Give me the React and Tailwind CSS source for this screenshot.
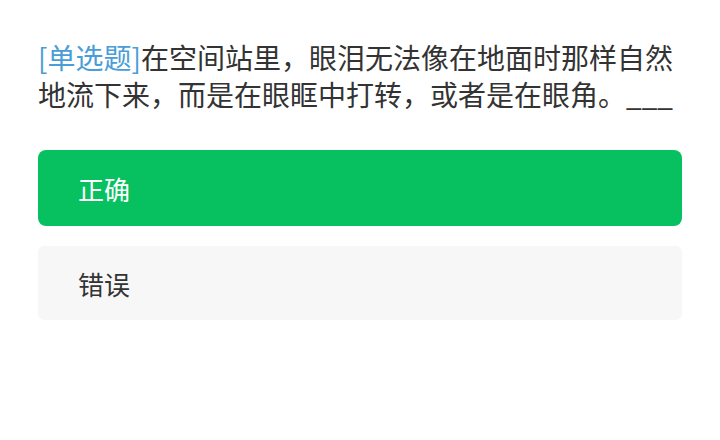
import React from "react";

const options = [
  { label: "正确", selected: true },
  { label: "错误", selected: false },
];

export default function App() {
  return (
    <div
      className="w-[720px] h-[440px] bg-white px-[38px] pt-[39px]"
      style={{ fontFamily: '"Noto Sans CJK SC", "Noto Sans", sans-serif' }}
    >
      <p className="text-[28px] leading-[37px] text-[#333333]">
        <span className="text-[#4a9dd6]">[单选题]</span>
        在空间站里，眼泪无法像在地面时那样自然地流下来，而是在眼眶中打转，或者是在眼角。___
      </p>
      <div className="mt-[37px] flex flex-col gap-[20px]">
        {options.map((o) => (
          <div
            key={o.label}
            className={
              o.selected
                ? "h-[76px] rounded-[8px] bg-[#07c160] text-white flex items-center px-[40px] text-[26px]"
                : "h-[74px] rounded-[6px] bg-[#f7f7f7] text-[#333333] flex items-center px-[40px] text-[26px]"
            }
          >
            {o.label}
          </div>
        ))}
      </div>
    </div>
  );
}
